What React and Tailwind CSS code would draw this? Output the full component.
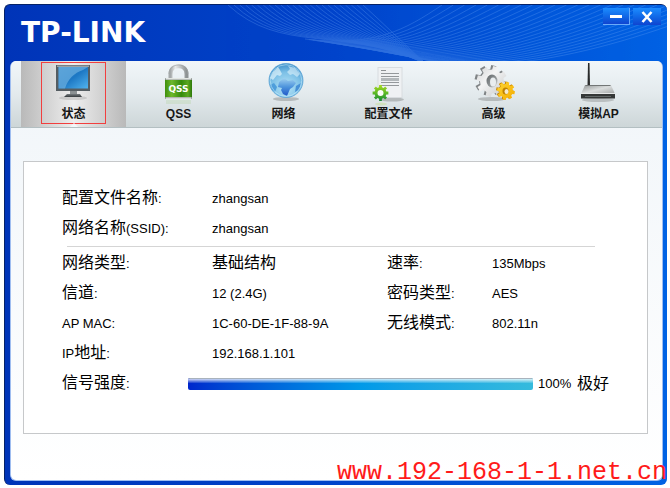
import { useState } from 'react'

// Closed outline of a cog wheel with square teeth
const gearPath = (cx, cy, outer, inner, teeth, turn = 0) => {
  const step = (Math.PI * 2) / teeth
  const points = []
  for (let i = 0; i < teeth; i++) {
    const a = i * step + turn
    const corners = [[-0.3, inner], [-0.22, outer], [0.22, outer], [0.3, inner]]
    corners.forEach(([k, r]) => {
      points.push(`${(cx + r * Math.cos(a + k * step)).toFixed(2)} ${(cy + r * Math.sin(a + k * step)).toFixed(2)}`)
    })
  }
  return `M${points.join('L')}Z`
}

const iconProps = { viewBox: '0 0 48 44', className: 'w-12 h-11', 'aria-hidden': true }

function MonitorIcon() {
  return (
    <svg {...iconProps}>
      <defs>
        <linearGradient id="screen" x1="0" y1="0" x2="1" y2="1">
          <stop offset="0" stopColor="#2d83c9" />
          <stop offset="0.5" stopColor="#1d78c4" />
          <stop offset="1" stopColor="#52b4ee" />
        </linearGradient>
        <linearGradient id="stand" x1="0" y1="0" x2="0" y2="1">
          <stop offset="0" stopColor="#777d80" />
          <stop offset="1" stopColor="#34393c" />
        </linearGradient>
      </defs>
      <ellipse cx="23" cy="36" rx="14" ry="2" fill="#777" opacity="0.25" />
      <path d="M6 3H40V29H6Z" fill="#555d62" />
      <path d="M7 3.5H39V5H7Z" fill="#9ca2a5" />
      <path d="M8.5 5H38V26.5H8.5Z" fill="url(#screen)" />
      <path d="M8.5 5H38L33 8C24 11 18 17 15 26.5H8.5Z" fill="#8cc5e9" opacity="0.5" />
      <path d="M20 29H27V32H20Z" fill="#8b9193" />
      <path d="M17 32H30L32 35H14Z" fill="url(#stand)" />
    </svg>
  )
}

function LockIcon() {
  return (
    <svg {...iconProps}>
      <defs>
        <linearGradient id="lockBody" x1="0" y1="0" x2="1" y2="0">
          <stop offset="0" stopColor="#3e8f0d" />
          <stop offset="0.25" stopColor="#6db82b" />
          <stop offset="0.6" stopColor="#348a0c" />
          <stop offset="0.85" stopColor="#5aa822" />
          <stop offset="1" stopColor="#2c7809" />
        </linearGradient>
        <linearGradient id="shackle" x1="0" y1="0" x2="1" y2="0">
          <stop offset="0" stopColor="#a5a9aa" />
          <stop offset="0.3" stopColor="#e9ebeb" />
          <stop offset="1" stopColor="#8e9394" />
        </linearGradient>
      </defs>
      <path d="M15.5 20V12C15.5 1.5 31.5 1.5 31.5 12V20" fill="none" stroke="url(#shackle)" strokeWidth="4" />
      <path d="M14 12C14 0 33 0 33 12" fill="none" stroke="#a0a5a6" strokeWidth="0.7" />
      <rect x="10" y="16" width="27" height="21" rx="1" fill="#8e9591" />
      <rect x="10" y="18" width="27" height="17" fill="url(#lockBody)" />
      <rect x="11" y="16" width="25" height="1.5" fill="#e2e6e2" />
      <rect x="11" y="35.5" width="25" height="1.5" fill="#d6dad6" />
      <text x="23.5" y="29.5" textAnchor="middle" fill="#fff" className="text-[9px] font-bold font-['DejaVu_Sans',sans-serif]">QSS</text>
      <rect x="11" y="38" width="25" height="4" fill="#9cc878" opacity="0.2" />
    </svg>
  )
}

function GlobeIcon() {
  return (
    <svg {...iconProps}>
      <defs>
        <radialGradient id="sea" cx="0.5" cy="0.7" r="0.75">
          <stop offset="0" stopColor="#b8e6f8" />
          <stop offset="0.6" stopColor="#7bbfe6" />
          <stop offset="1" stopColor="#2f84c4" />
        </radialGradient>
        <linearGradient id="land" x1="0" y1="0" x2="0" y2="1">
          <stop offset="0" stopColor="#9fd0f0" />
          <stop offset="0.5" stopColor="#4c93dc" />
          <stop offset="1" stopColor="#2058c8" />
        </linearGradient>
      </defs>
      <ellipse cx="26" cy="37" rx="13" ry="2" fill="#666" opacity="0.35" />
      <circle cx="26" cy="18.5" r="17" fill="url(#sea)" stroke="#5aa3d4" strokeWidth="0.8" />
      <path d="M13 10L18 5L20 8L22 12L20 14L17 13L13 18L10 16Z" fill="#dff3fb" opacity="0.7" />
      <path d="M28 4L35 6L40 12L37 15L33 12L30 13L27 10L30 7Z" fill="#dff3fb" opacity="0.6" />
      <path d="M19 20L24 16L28 19L33 18L36 21L33 25L30 27L27 34L23 32L21 28L22 26L18 25Z" fill="url(#land)" />
      <path d="M10 23L14 21L17 25L15 30L12 28Z" fill="#4e9edb" />
      <path d="M36 24L41 21L39 28L35 30Z" fill="#4690d6" />
      <circle cx="26" cy="18.5" r="15.8" fill="none" stroke="#cceffb" strokeWidth="0.8" opacity="0.7" />
    </svg>
  )
}

function ProfileIcon() {
  return (
    <svg {...iconProps}>
      <defs>
        <linearGradient id="cogGreen" x1="0" y1="0" x2="0" y2="1">
          <stop offset="0" stopColor="#a5d820" />
          <stop offset="0.5" stopColor="#5cb925" />
          <stop offset="1" stopColor="#168a35" />
        </linearGradient>
      </defs>
      <ellipse cx="27" cy="37.5" rx="12" ry="2" fill="#666" opacity="0.35" />
      <rect x="13" y="5.5" width="24" height="30" fill="#eff1f3" stroke="#d8dcdf" />
      <path d="M16 8.5H21" stroke="#8d9194" />
      <path d="M16 11.5H34M16 14.5H34M16 20.5H34M16 23.5H34" stroke="#94989b" />
      <rect x="16" y="16" width="18" height="3" fill="#b3b8bb" />
      <path d={gearPath(15.5, 31, 8, 6, 8)} fill="url(#cogGreen)" />
      <circle cx="15.5" cy="31" r="3" fill="#fafcf7" />
      <ellipse cx="16" cy="42" rx="6" ry="1.5" fill="#a5d820" opacity="0.2" />
    </svg>
  )
}

function GearsIcon() {
  return (
    <svg {...iconProps}>
      <defs>
        <linearGradient id="steel" x1="0" y1="0" x2="1" y2="1">
          <stop offset="0" stopColor="#d2d3d4" />
          <stop offset="0.4" stopColor="#f4f4f4" />
          <stop offset="1" stopColor="#c2c4c5" />
        </linearGradient>
        <linearGradient id="hole" x1="0" y1="0" x2="1" y2="1">
          <stop offset="0" stopColor="#606567" />
          <stop offset="0.6" stopColor="#949899" />
          <stop offset="1" stopColor="#e9ebeb" />
        </linearGradient>
        <linearGradient id="gold" x1="0" y1="0" x2="1" y2="1">
          <stop offset="0" stopColor="#ffd632" />
          <stop offset="1" stopColor="#f3aa00" />
        </linearGradient>
      </defs>
      <ellipse cx="22" cy="37" rx="14" ry="2" fill="#666" opacity="0.35" />
      <path d={gearPath(20, 18.5, 15.5, 11, 8, 0.25)} fill="#808486" />
      <path d={gearPath(22, 19.5, 15.5, 12, 8, 0.25)} fill="url(#steel)" />
      <ellipse cx="22" cy="19" rx="5.5" ry="6.5" fill="url(#hole)" />
      <ellipse cx="23" cy="20" rx="3" ry="4.5" fill="#e9edef" />
      <path d={gearPath(35, 28.5, 9, 6.5, 8, 0.2)} fill="#c78500" />
      <path d={gearPath(36, 29, 9, 7, 8, 0.2)} fill="url(#gold)" />
      <ellipse cx="35.5" cy="29" rx="3" ry="3.5" fill="#bf8200" />
      <ellipse cx="36.5" cy="29.5" rx="2" ry="2.5" fill="#f5ead0" />
    </svg>
  )
}

function RouterIcon() {
  return (
    <svg {...iconProps}>
      <defs>
        <linearGradient id="lid" x1="0" y1="0" x2="1" y2="1">
          <stop offset="0" stopColor="#8f9393" />
          <stop offset="0.5" stopColor="#dadddd" />
          <stop offset="1" stopColor="#a2a5a5" />
        </linearGradient>
      </defs>
      <ellipse cx="23" cy="38" rx="16" ry="2" fill="#666" opacity="0.3" />
      <path d="M13 1H14.5L15 24H12.5Z" fill="#292b2b" />
      <path d="M10 23H36L40 32H6Z" fill="url(#lid)" />
      <path d="M10.5 23.5H35.5" stroke="#727676" />
      <path d="M6 31.5H40V36.5H6Z" fill="#343737" />
      <path d="M6 31.5H40" stroke="#e6e8e8" />
      <path d="M10 34.5H36" stroke="#6d7474" strokeWidth="0.8" />
    </svg>
  )
}

const tabs = [
  { id: 'status', label: '状态', Icon: MonitorIcon },
  { id: 'qss', label: 'QSS', Icon: LockIcon },
  { id: 'network', label: '网络', Icon: GlobeIcon },
  { id: 'profile', label: '配置文件', Icon: ProfileIcon },
  { id: 'advanced', label: '高级', Icon: GearsIcon },
  { id: 'softap', label: '模拟AP', Icon: RouterIcon },
]

const profileRows = [
  [{ cn: '配置文件名称', after: ':', value: 'zhangsan' }],
  [{ cn: '网络名称', after: '(SSID):', value: 'zhangsan' }],
]

const linkRows = [
  [{ cn: '网络类型', after: ':', cnValue: '基础结构' }, { cn: '速率', after: ':', value: '135Mbps' }],
  [{ cn: '信道', after: ':', value: '12 (2.4G)' }, { cn: '密码类型', after: ':', value: 'AES' }],
  [{ before: 'AP MAC:', value: '1C-60-DE-1F-88-9A' }, { cn: '无线模式', after: ':', value: '802.11n' }],
  [{ before: 'IP', cn: '地址', after: ':', value: '192.168.1.101' }],
]

// Chinese runs are set larger than the latin text beside them
function Cn({ children }) {
  return <span className="text-base leading-none">{children}</span>
}

function Row({ items }) {
  return (
    <dl className="grid grid-cols-[150px_1fr_105px_117px] items-center h-[30px] whitespace-nowrap">
      {items.map((item) => (
        <div key={item.cn || item.before} className="contents">
          <dt>
            {item.before}
            {item.cn && <Cn>{item.cn}</Cn>}
            {item.after}
          </dt>
          <dd>{item.cnValue ? <Cn>{item.cnValue}</Cn> : item.value}</dd>
        </div>
      ))}
    </dl>
  )
}

// Two fans of thin lines, each blended from its first curve to its last
const fans = [
  { count: 24, from: [223, 0, 275, 48, 335, 22, 415, 56], to: [358, 0, 378, 18, 398, 38, 418, 56] },
  { count: 26, from: [300, 34, 370, 42, 400, 25, 437, 0], to: [395, 48, 465, 72, 570, 60, 720, 0] },
]

const fanLine = (fan, i) => {
  const t = i / (fan.count - 1)
  const p = fan.from.map((v, k) => (v + (fan.to[k] - v) * t).toFixed(1))
  return `M${p[0]} ${p[1]}C${p.slice(2).join(' ')}`
}

function Waves() {
  return (
    <svg className="absolute inset-0 w-full h-full" viewBox="0 0 662 56" preserveAspectRatio="xMaxYMin slice" fill="none" aria-hidden="true">
      <g stroke="#6ba5f5" strokeWidth="0.7" opacity="0.42">
        {fans.map((fan) => Array.from({ length: fan.count }, (_, i) => (
          <path key={`${fan.count}-${i}`} d={fanLine(fan, i)} />
        )))}
      </g>
    </svg>
  )
}

export default function App() {
  const [active, setActive] = useState('status')
  const [signal] = useState(100)

  return (
    <main className="min-h-screen bg-white pl-1 pt-1 pr-[3px] text-[13px] text-black font-['Liberation_Sans','Noto_Sans_CJK_SC',sans-serif]">
      <div className="relative rounded-md border-l border-t border-[#062267] bg-gradient-to-r from-[#0034b8] via-[#0044cb] to-[#0062e4] overflow-hidden">
        <header className="relative h-14 flex items-start justify-between pl-4 pr-[6px]">
          <Waves />
          <h1 className="relative pt-3 text-[28px] leading-8 font-bold text-white font-['DejaVu_Sans',sans-serif]">TP-LINK</h1>
          <div className="relative flex gap-[3px] pt-[3px]">
            <button type="button" aria-label="最小化" className="w-[27px] h-[17px] flex items-center justify-center bg-gradient-to-b from-[#1d8cff] to-[#1044d0] border-r border-b border-[#69aafa]">
              <span className="w-3 h-[3px] bg-white" />
            </button>
            <button type="button" aria-label="关闭" className="w-7 h-[17px] flex items-center justify-center bg-gradient-to-b from-[#1d8cff] to-[#1044d0]">
              <svg viewBox="0 0 12 12" className="w-3 h-3" aria-hidden="true">
                <path d="M1.5 1L10.5 11M10.5 1L1.5 11" stroke="#fff" strokeWidth="2.6" />
              </svg>
            </button>
          </div>
        </header>

        <div className="ml-[5px] mr-1 mb-1 rounded-md border-x border-b border-[#9fbdf0] overflow-hidden bg-gradient-to-b from-[#f0f5f9] to-white">
          <nav className="flex h-[67px] pl-[10px] pr-[11px] bg-gradient-to-b from-[#f1f6f9] via-[#e3eaed] to-[#cdd6d8] border-b border-[#b3bfc2]">
            {tabs.map(({ id, label, Icon }) => (
              <button
                key={id}
                type="button"
                onClick={() => setActive(id)}
                aria-current={active === id ? 'page' : undefined}
                className={`relative flex-1 flex flex-col items-center pt-px text-xs leading-4 font-bold text-[#171717] ${
                  active === id ? 'bg-gradient-to-r from-[#b9b9b9] via-[#eeeeee] to-[#b9b9b9]' : ''
                }`}
              >
                <Icon />
                {label}
                {active === id && (
                  <>
                    <span className="absolute top-px inset-x-5 bottom-[3px] border border-[#f13f3f]" />
                    <svg viewBox="0 0 8 4" className="absolute bottom-0 w-2 h-1" aria-hidden="true">
                      <path d="M0 4L4 0L8 4Z" fill="#f4f7f9" />
                    </svg>
                  </>
                )}
              </button>
            ))}
          </nav>

          <section className="mt-[33px] ml-3 mr-[14px] mb-[46px] border border-[#c6c8ca] bg-white pt-[22px] px-[38px] pb-[34px]">
            {profileRows.map((items, i) => <Row key={i} items={items} />)}
            <hr className="my-[2px] ml-[5px] mr-[14px] border-[#d5d5d5]" />
            {linkRows.map((items, i) => <Row key={i} items={items} />)}

            <div className="flex items-center h-[30px] whitespace-nowrap">
              <span id="signal-label" className="w-[126px]"><Cn>信号强度</Cn>:</span>
              <div
                role="progressbar"
                aria-labelledby="signal-label"
                aria-valuenow={signal}
                className="relative flex-1 h-3 rounded-xs overflow-hidden bg-[#e6e6e6]"
              >
                <div className="h-full bg-gradient-to-r from-[#0026cc] via-[#0099e8] to-[#35bbdd]" style={{ width: `${signal}%` }} />
                <div className="absolute inset-x-0 top-0 h-[5px] border-t border-[#a9b3bd] bg-gradient-to-b from-white/80 to-white/10" />
              </div>
              <span className="w-19 pl-[5px] flex items-center justify-between">
                {signal}%
                <Cn>极好</Cn>
              </span>
            </div>
          </section>
        </div>
      </div>

      <p className="absolute right-[3px] top-[457px] text-[25px] leading-8 text-[#ff1a1a] font-['Liberation_Mono',monospace]">
        www.192-168-1-1.net.cn
      </p>
    </main>
  )
}
